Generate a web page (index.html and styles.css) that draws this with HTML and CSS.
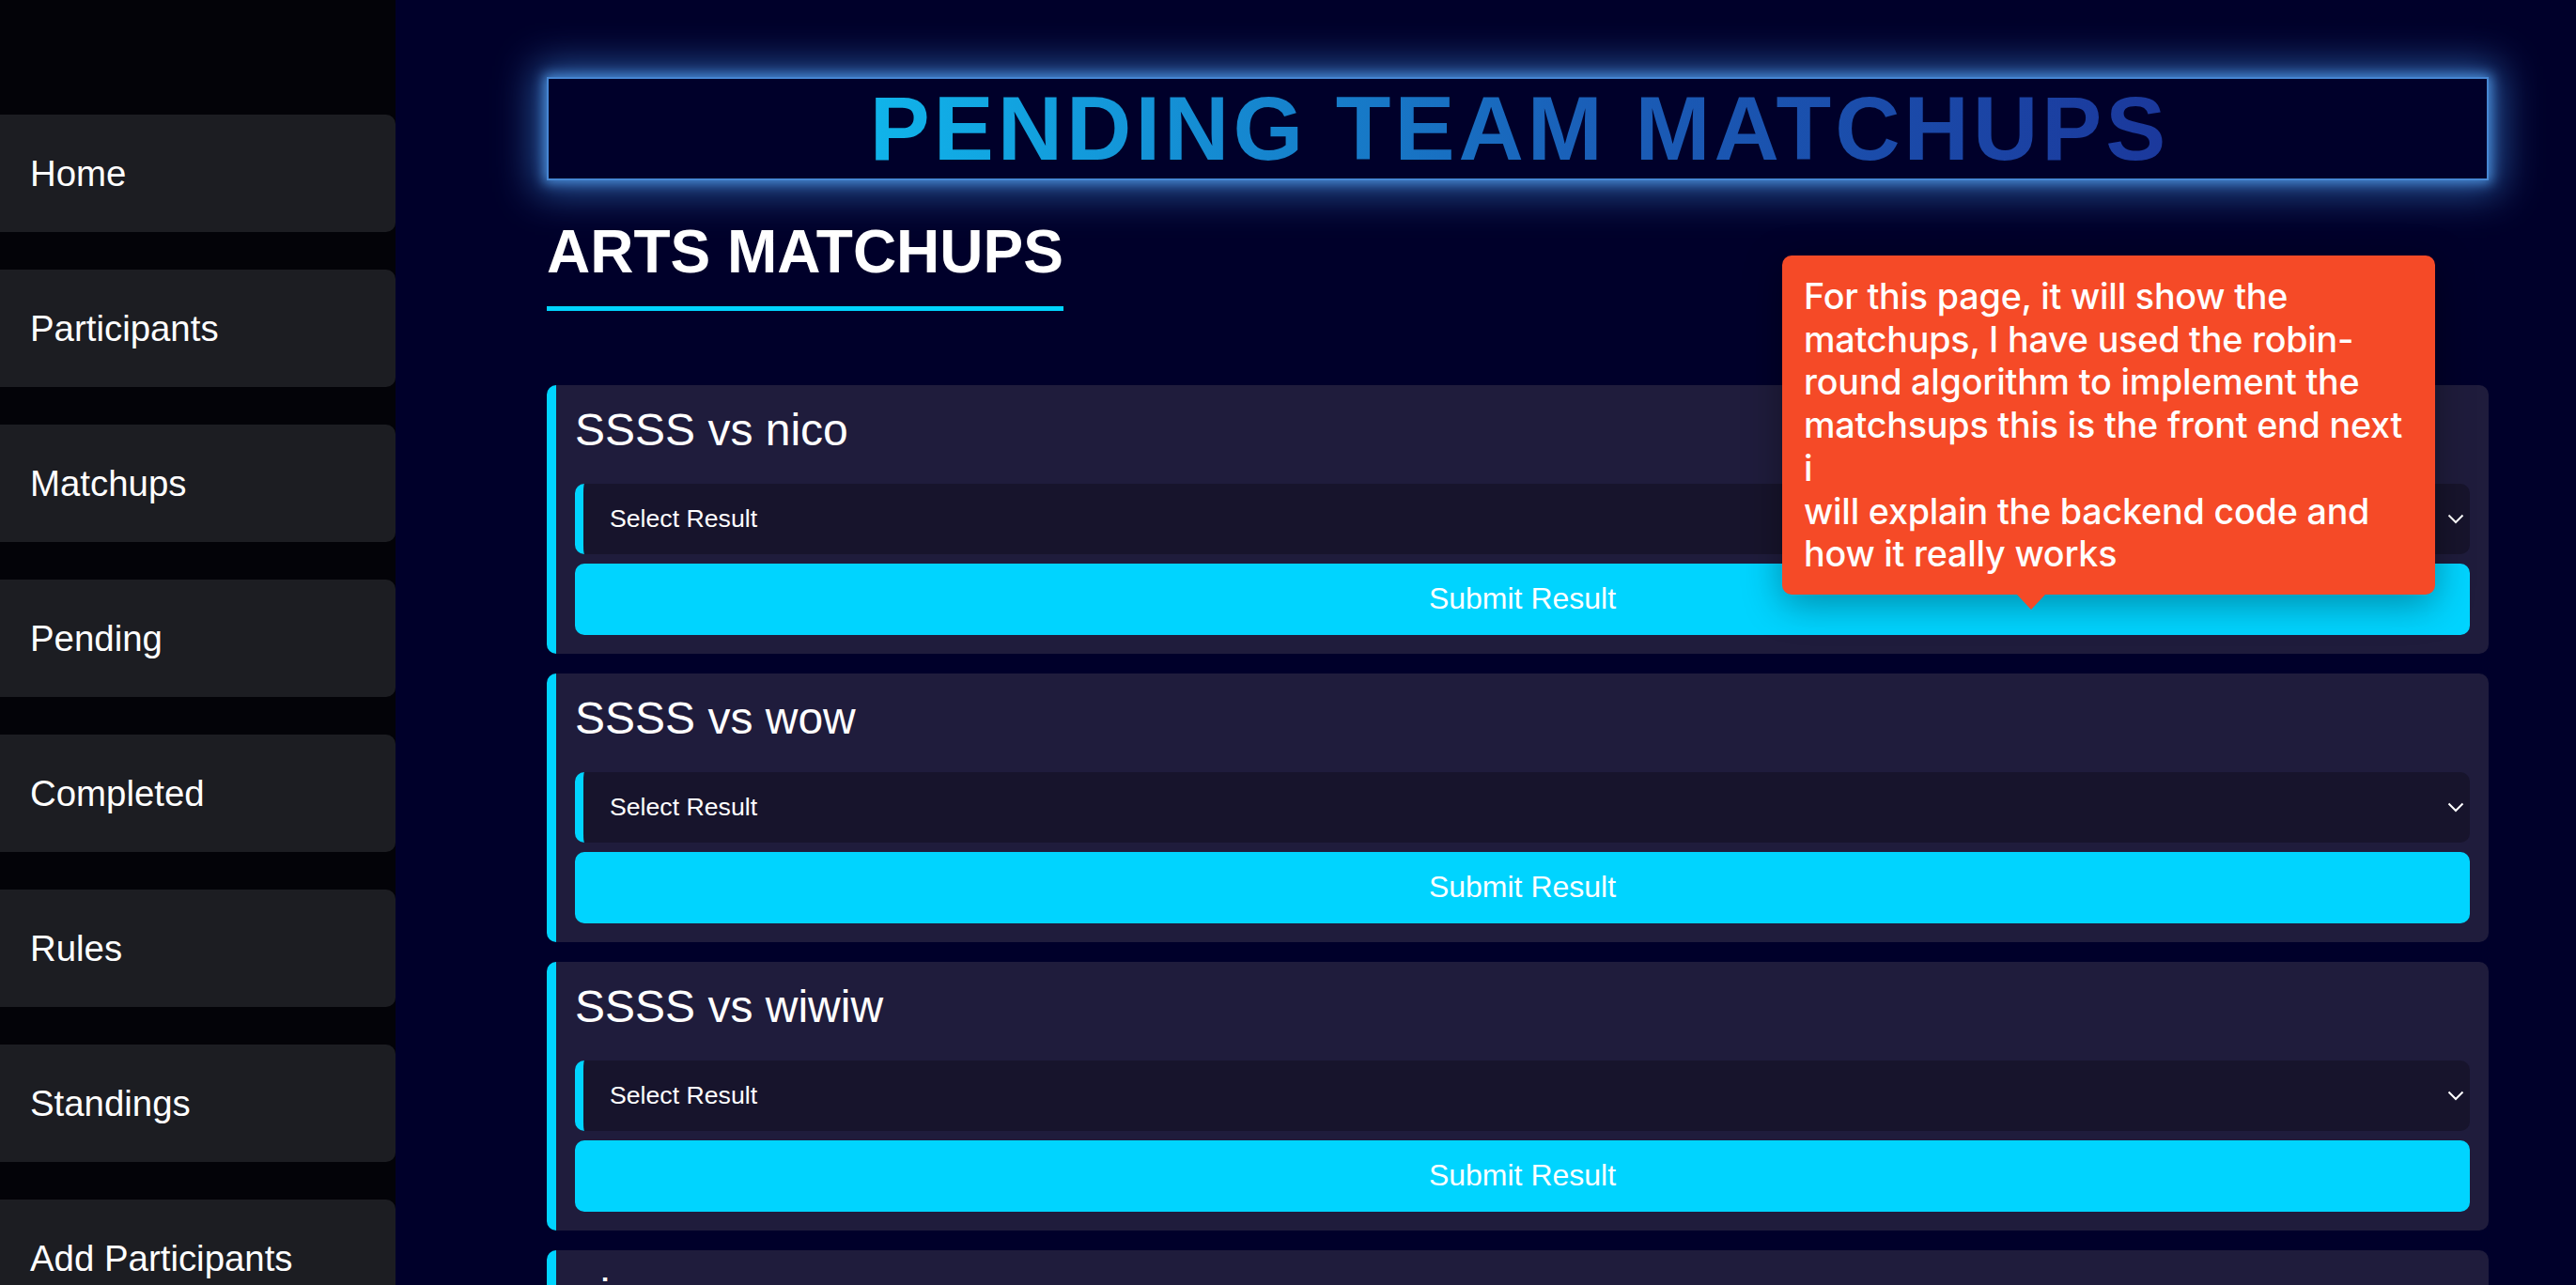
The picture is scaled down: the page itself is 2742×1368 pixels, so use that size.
FILE: index.html
```html
<!DOCTYPE html>
<html lang="en">
<head>
<meta charset="utf-8">
<title>Pending Team Matchups</title>
<link rel="stylesheet" href="styles.css">
</head>
<body>
<div class="layout">
  <nav class="sidebar">
    <a class="nav-item" href="#">Home</a>
    <a class="nav-item" href="#">Participants</a>
    <a class="nav-item" href="#">Matchups</a>
    <a class="nav-item" href="#">Pending</a>
    <a class="nav-item" href="#">Completed</a>
    <a class="nav-item" href="#">Rules</a>
    <a class="nav-item" href="#">Standings</a>
    <a class="nav-item" href="#">Add Participants</a>
  </nav>
  <main class="main">
    <h1 class="page-title"><span class="title-text">PENDING TEAM MATCHUPS</span></h1>
    <h2 class="section-title">ARTS MATCHUPS</h2>

    <div class="match-list">
      <div class="match-card">
        <h3 class="match-name">SSSS vs nico</h3>
        <div class="select-wrap">
          <select class="result-select"><option>Select Result</option></select>
          <svg class="chevron" width="18" height="11" viewBox="0 0 18 11"><path d="M1.5 1.5 L9 9 L16.5 1.5" fill="none" stroke="#ffffff" stroke-width="2"/></svg>
        </div>
        <button class="submit-btn">Submit Result</button>
      </div>
      <div class="match-card">
        <h3 class="match-name">SSSS vs wow</h3>
        <div class="select-wrap">
          <select class="result-select"><option>Select Result</option></select>
          <svg class="chevron" width="18" height="11" viewBox="0 0 18 11"><path d="M1.5 1.5 L9 9 L16.5 1.5" fill="none" stroke="#ffffff" stroke-width="2"/></svg>
        </div>
        <button class="submit-btn">Submit Result</button>
      </div>
      <div class="match-card">
        <h3 class="match-name">SSSS vs wiwiw</h3>
        <div class="select-wrap">
          <select class="result-select"><option>Select Result</option></select>
          <svg class="chevron" width="18" height="11" viewBox="0 0 18 11"><path d="M1.5 1.5 L9 9 L16.5 1.5" fill="none" stroke="#ffffff" stroke-width="2"/></svg>
        </div>
        <button class="submit-btn">Submit Result</button>
      </div>
      <div class="match-card">
        <h3 class="match-name">nico vs wow</h3>
        <div class="select-wrap">
          <select class="result-select"><option>Select Result</option></select>
          <svg class="chevron" width="18" height="11" viewBox="0 0 18 11"><path d="M1.5 1.5 L9 9 L16.5 1.5" fill="none" stroke="#ffffff" stroke-width="2"/></svg>
        </div>
        <button class="submit-btn">Submit Result</button>
      </div>
    </div>

    <div class="tooltip">For this page, it will show the<br>matchups, I have used the robin-<br>round algorithm to implement the<br>matchsups this is the front end next<br>i<br>will explain the backend code and<br>how it really works</div>
  </main>
</div>
</body>
</html>
```
FILE: styles.css
```css
html, body {
  margin: 0;
  padding: 0;
  height: 1368px;
  overflow: hidden;
  background: #00002a;
  font-family: "Liberation Sans", Arial, Helvetica, sans-serif;
  color: #ffffff;
}

.layout {
  display: flex;
  height: 1368px;
}

.sidebar {
  width: 421px;
  flex: 0 0 421px;
  background: #030308;
  padding-top: 122px;
  display: flex;
  flex-direction: column;
  gap: 40px;
  box-sizing: border-box;
}

.nav-item {
  display: block;
  background: #1c1d22;
  color: #ffffff;
  text-decoration: none;
  font-size: 38.4px;
  line-height: 45px;
  padding: 40px 32px;
  border-radius: 0 10px 10px 0;
  white-space: nowrap;
}

.main {
  position: relative;
  flex: 1;
  padding: 82px 93px 0 161px;
  box-sizing: border-box;
}

.page-title {
  margin: 0;
  height: 110px;
  box-sizing: border-box;
  border: 2px solid #4686d2;
  background: #00002a;
  box-shadow: 0 0 12px 3px rgba(74, 140, 215, 0.95), 0 0 40px 12px rgba(60, 125, 205, 0.7);
  text-align: center;
  font-size: 96px;
  line-height: 106px;
  font-weight: 700;
  letter-spacing: 4px;
}

.title-text {
  display: inline-block;
  background: linear-gradient(90deg, #10b4ea 0%, #1a5fb8 55%, #1b389c 100%);
  -webkit-background-clip: text;
  background-clip: text;
  color: transparent;
  margin-right: -4px;
}

.section-title {
  display: inline-block;
  margin: 40px 0 79px 0;
  font-size: 64px;
  font-weight: 700;
  line-height: 73.6px;
  padding-bottom: 20px;
  border-bottom: 5px solid #00d4ff;
}

.match-list {
  display: flex;
  flex-direction: column;
  gap: 21px;
}

.match-card {
  background: #1f1c3c;
  border-left: 10px solid #00d4ff;
  border-radius: 10px;
  padding: 20px;
  display: flex;
  flex-direction: column;
}

.match-name {
  margin: 0 0 30px 0;
  font-size: 48px;
  font-weight: 400;
  line-height: 55px;
}

.select-wrap {
  position: relative;
  height: 75px;
  margin-bottom: 10px;
}

.result-select {
  -webkit-appearance: none;
  appearance: none;
  width: 100%;
  height: 75px;
  box-sizing: border-box;
  background: #17142c;
  color: #ffffff;
  border: none;
  border-left: 9px solid #00d4ff;
  border-radius: 10px;
  padding: 0 28px;
  font-family: "Liberation Sans", Arial, Helvetica, sans-serif;
  font-size: 26.67px;
  outline: none;
}

.chevron {
  position: absolute;
  right: 6px;
  top: 32px;
}

.submit-btn {
  height: 76px;
  width: 100%;
  border: none;
  border-radius: 10px;
  background: #00d4ff;
  color: #ffffff;
  font-family: "Liberation Sans", Arial, Helvetica, sans-serif;
  font-size: 32px;
  cursor: pointer;
}

.tooltip {
  position: absolute;
  left: 1476px;
  top: 272px;
  width: 695px;
  box-sizing: border-box;
  padding: 21px 22px 20px 23px;
  background: #f54a27;
  border-radius: 10px;
  color: #ffffff;
  font-family: Inter, "Noto Sans", sans-serif;
  font-size: 37.7px;
  font-weight: 500;
  line-height: 45.7px;
  letter-spacing: -0.2px;
  white-space: nowrap;
  box-shadow: 0 10px 40px rgba(0, 0, 0, 0.35);
}

.tooltip::after {
  content: "";
  position: absolute;
  left: 250px;
  bottom: -16px;
  border-left: 15px solid transparent;
  border-right: 15px solid transparent;
  border-top: 16px solid #f54a27;
}
```
